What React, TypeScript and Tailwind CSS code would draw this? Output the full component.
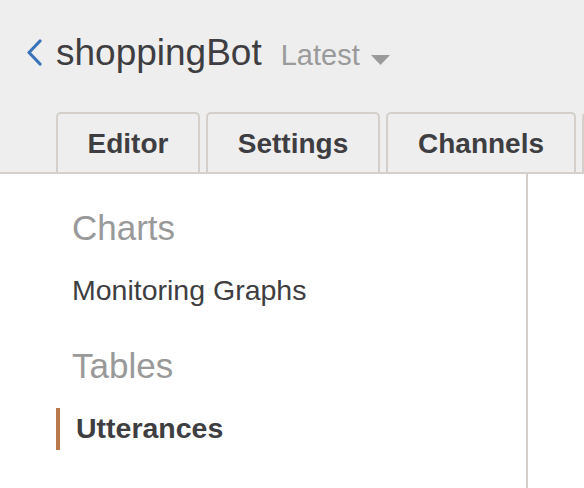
export default function App() {
  const tabs = [
    { label: "Editor", w: "w-[144px]" },
    { label: "Settings", w: "w-[174px]" },
    { label: "Channels", w: "w-[190px]" },
    { label: "", w: "w-[170px]" },
  ];

  return (
    <div
      className="w-[584px] h-[488px] overflow-hidden bg-white text-[#3e3e42]"
      style={{ fontFamily: '"Liberation Sans", Arial, sans-serif' }}
    >
      {/* header */}
      <header className="h-[174px] bg-[#eeeeee] border-b-2 border-[#d4cfca] overflow-hidden">
        <div className="flex items-baseline pl-[26px] pt-[34px]">
          <svg
            className="self-center"
            width="17"
            height="27"
            viewBox="0 0 17 27"
            fill="none"
          >
            <path
              d="M14 2 L3 13.5 L14 25"
              stroke="#3b73b9"
              strokeWidth="3.2"
              strokeLinecap="round"
              strokeLinejoin="round"
            />
          </svg>
          <span className="ml-[13px] text-[37px] leading-[37px]">
            shoppingBot
          </span>
          <span className="ml-[19px] text-[29px] leading-[29px] text-[#9a9a9a]">
            Latest
          </span>
          <svg
            className="ml-[11px] mb-[3px]"
            width="19"
            height="10"
            viewBox="0 0 19 10"
          >
            <path d="M0 0 H19 L9.5 10 Z" fill="#9a9a9a" />
          </svg>
        </div>

        <div className="flex gap-[6px] pl-[56px] mt-[41px]">
          {tabs.map((t, i) => (
            <div
              key={i}
              className={`${t.w} shrink-0 h-[60px] border-2 border-b-0 border-[#d4cfca] rounded-t-[5px] pt-[16px] text-center text-[28px] leading-[28px] font-bold`}
            >
              {t.label}
            </div>
          ))}
        </div>
      </header>

      {/* body */}
      <div className="flex h-[314px]">
        <nav className="w-[528px] border-r-2 border-[#d4cfca] pl-[56px] pt-[36px]">
          <div className="ml-[16px] text-[35px] leading-[35px] text-[#999999]">
            Charts
          </div>
          <div className="ml-[16px] mt-[31px] text-[28.5px] leading-[28.5px]">
            Monitoring Graphs
          </div>
          <div className="ml-[16px] mt-[43px] text-[35px] leading-[35px] text-[#999999]">
            Tables
          </div>
          <div className="mt-[25px] h-[42px] flex items-center border-l-4 border-[#b9794a] pl-[16px] text-[28.5px] leading-[28.5px] font-bold">
            Utterances
          </div>
        </nav>
        <div className="flex-1" />
      </div>
    </div>
  );
}
